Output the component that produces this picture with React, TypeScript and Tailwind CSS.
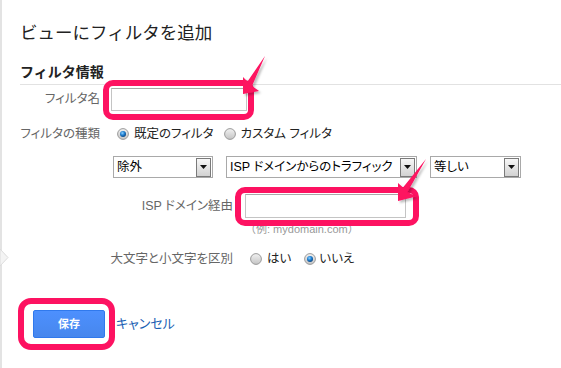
import React from "react";

const Radio = ({ checked }: { checked?: boolean }) => (
  <svg width="12" height="12" viewBox="0 0 12 12" className="shrink-0">
    <defs>
      <linearGradient id="rgOuter" x1="0" y1="0" x2="0" y2="1">
        <stop offset="0" stopColor="#f2f2f2" />
        <stop offset="1" stopColor="#c4c4c4" />
      </linearGradient>
      <radialGradient id="rgDot" cx="0.4" cy="0.35" r="0.7">
        <stop offset="0" stopColor="#8fd0ff" />
        <stop offset="0.5" stopColor="#1d7fd1" />
        <stop offset="1" stopColor="#0b3f78" />
      </radialGradient>
    </defs>
    <circle cx="6" cy="6" r="5.4" fill="url(#rgOuter)" stroke="#9a9a9a" strokeWidth="1" />
    {checked && <circle cx="6" cy="6" r="3" fill="url(#rgDot)" />}
  </svg>
);

const Select = ({ w, text }: { w: string; text: React.ReactNode }) => (
  <div className={`flex h-[22px] items-center border border-[#a9a9a9] bg-white pl-[3px] pr-[1px] ${w}`}>
    <span className="flex-1 truncate whitespace-nowrap text-[12.5px] leading-[20px] text-black [font-feature-settings:'palt']">{text}</span>
    <div className="flex h-[19px] w-[15px] shrink-0 items-center justify-center border border-[#7a7a7a] bg-gradient-to-b from-[#f7f7f7] to-[#d2d2d2]">
      <svg width="7" height="4" viewBox="0 0 7 4">
        <path d="M0 0h7L3.5 4z" fill="#111" />
      </svg>
    </div>
  </div>
);

export default function App() {
  return (
    <div className="relative h-[368px] w-[561px] overflow-hidden bg-white font-['Liberation_Sans','Noto_Sans_CJK_JP',sans-serif]">
      <div className="h-full border-l-2 border-[#e3e3e3] pl-[18px] pt-[21px]">
        <div className="text-[17.5px] leading-[24px] text-[#222]">ビューにフィルタを追加</div>
        <div className="mt-[17px] text-[14px] font-bold leading-[20px] text-[#222]">フィルタ情報</div>
        <div className="mt-[2px] border-t border-[#e2e2e2]" />

        {/* filter name */}
        <div className="mt-[3px] flex h-[23px] items-center">
          <div className="flex w-[80px] shrink-0 justify-end whitespace-nowrap text-[12.5px] text-[#666] [font-feature-settings:'palt']">
            <span className="shrink-0">フィルタ名</span>
          </div>
          <div className="ml-[11px] h-[23px] w-[136px] border border-[#c4c4c4] border-t-[#a8a8a8] bg-white" />
        </div>

        {/* filter type */}
        <div className="mt-[13px] flex h-[20px] items-center whitespace-nowrap text-[12.5px] [font-feature-settings:'palt']">
          <div className="flex w-[80px] shrink-0 justify-end text-[#666]">
            <span className="shrink-0">フィルタの種類</span>
          </div>
          <div className="ml-[17px]"><Radio checked /></div>
          <span className="ml-[5px] text-[#222]">既定のフィルタ</span>
          <div className="ml-[10px]"><Radio /></div>
          <span className="ml-[5px] text-[#222]">カスタム フィルタ</span>
        </div>

        {/* selects */}
        <div className="mt-[12px] flex gap-[13px] pl-[93px]">
          <Select w="w-[100px]" text="除外" />
          <Select w="w-[191px]" text="ISP ドメインからのトラフィック" />
          <Select w="w-[91px]" text="等しい" />
        </div>

        {/* ISP domain */}
        <div className="mt-[16px] flex h-[24px] items-center pl-[93px]">
          <div className="flex w-[120px] shrink-0 justify-end whitespace-nowrap text-[12.5px] text-[#666] [font-feature-settings:'palt']">
            <span className="shrink-0">ISP ドメイン経由</span>
          </div>
          <div className="ml-[12px] h-[24px] w-[161px] border border-[#c4c4c4] border-t-[#a8a8a8] bg-white" />
        </div>
        <div className="mt-[4px] pl-[225px] text-[11px] leading-[14px] text-[#999]">（例: mydomain.com）</div>

        {/* case sensitive */}
        <div className="mt-[13px] flex h-[20px] items-center whitespace-nowrap pl-[93px] text-[12.5px] [font-feature-settings:'palt']">
          <div className="flex w-[120px] shrink-0 justify-end text-[#666]">
            <span className="shrink-0">大文字と小文字を区別</span>
          </div>
          <div className="ml-[17px]"><Radio /></div>
          <span className="ml-[5px] text-[#222]">はい</span>
          <div className="ml-[13px]"><Radio checked /></div>
          <span className="ml-[3px] text-[#222]">いいえ</span>
        </div>

        {/* buttons */}
        <div className="mt-[41px] flex items-center pl-[13px]">
          <div className="flex h-[28px] w-[72px] items-center justify-center rounded-[2px] border border-[#3079ed] bg-gradient-to-b from-[#4d90fe] to-[#4787ed] text-[11px] font-bold text-white">
            保存
          </div>
          <span className="ml-[11px] whitespace-nowrap text-[13px] text-[#1a5fb4] [font-feature-settings:'palt']">キャンセル</span>
        </div>
      </div>

      {/* left notch */}
      <svg className="pointer-events-none absolute left-0 top-[249px]" width="9" height="18" viewBox="0 0 9 18">
        <polygon points="0,0 8,8.5 0,17" fill="#f4f4f4" stroke="#dcdcdc" strokeWidth="1" />
      </svg>

      {/* highlight rectangles */}
      <div className="pointer-events-none absolute left-[103px] top-[80px] h-[40px] w-[151px] rounded-[10px] border-[6px] border-[#fd1261]" />
      <div className="pointer-events-none absolute left-[235px] top-[187px] h-[39px] w-[184px] rounded-[10px] border-[6px] border-[#fd1261]" />
      <div className="pointer-events-none absolute left-[18px] top-[298px] h-[52px] w-[97px] rounded-[13px] border-[6px] border-[#fd1261]" />

      {/* arrows */}
      <svg className="pointer-events-none absolute left-0 top-0" width="561" height="368" viewBox="0 0 561 368">
        <defs>
          <filter id="arrowShadow" x="-50%" y="-50%" width="200%" height="200%">
            <feDropShadow dx="2" dy="2" stdDeviation="1.2" floodColor="#000" floodOpacity="0.25" />
          </filter>
        </defs>
        <polygon
          points="243,94 243,77 247.5,81.5 265,56 252,86 259,91"
          fill="#fd1261"
          filter="url(#arrowShadow)"
        />
        <polygon
          points="398,201 398,183 403,187.5 426,159 407.5,192 416,196.5"
          fill="#fd1261"
          filter="url(#arrowShadow)"
        />
      </svg>
    </div>
  );
}
